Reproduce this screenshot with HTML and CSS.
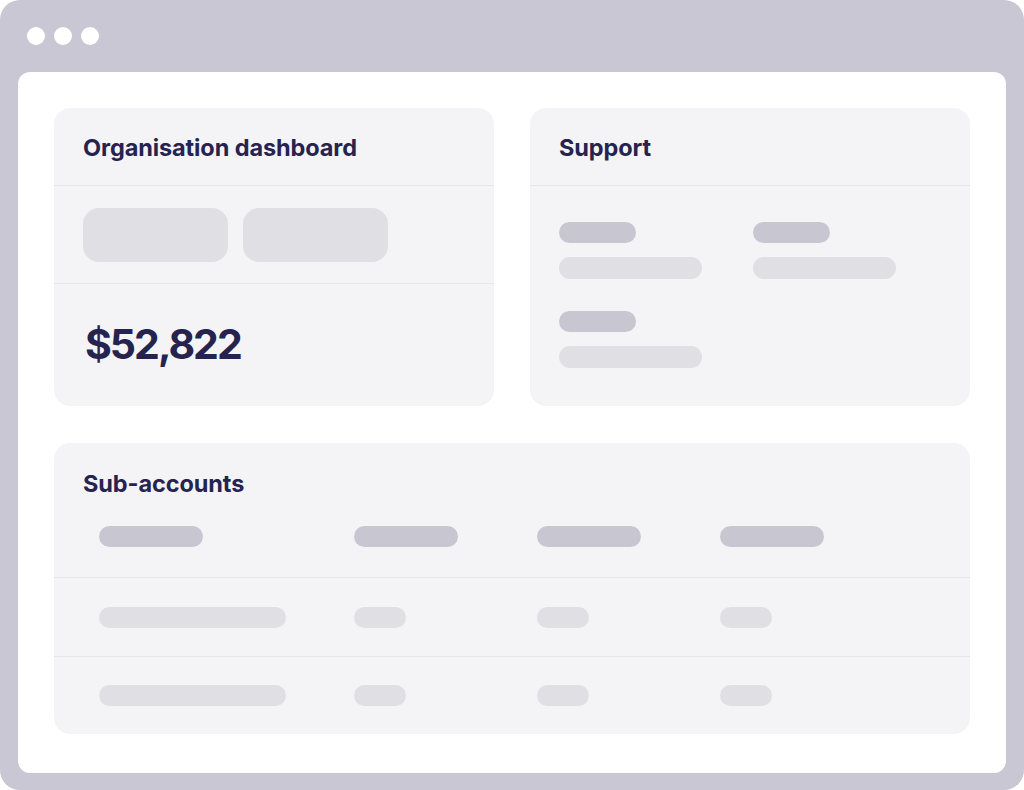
FILE: index.html
```html
<!DOCTYPE html>
<html lang="en">
<head>
    <meta charset="UTF-8">
    <meta name="viewport" content="width=device-width, initial-scale=1.0">
    <title>Organisation dashboard</title>
    <link rel="stylesheet" href="styles.css">
</head>
<body>
    <div class="browser">
        <div class="browser-bar">
            <span class="dot"></span>
            <span class="dot"></span>
            <span class="dot"></span>
        </div>

        <div class="viewport">
            <div class="card">
                <div class="card-header">
                    <h2>Organisation dashboard</h2>
                </div>
                <div class="card-tabs">
                    <div class="tab-block"></div>
                    <div class="tab-block"></div>
                </div>
                <div class="card-amount">$52,822</div>
            </div>

            <div class="card">
                <div class="card-header">
                    <h2>Support</h2>
                </div>
                <div class="support-grid">
                    <div class="support-item">
                        <div class="bar bar-dark bar-short"></div>
                        <div class="bar bar-light bar-long"></div>
                    </div>
                    <div class="support-item">
                        <div class="bar bar-dark bar-short"></div>
                        <div class="bar bar-light bar-long"></div>
                    </div>
                    <div class="support-item">
                        <div class="bar bar-dark bar-short"></div>
                        <div class="bar bar-light bar-long"></div>
                    </div>
                </div>
            </div>

            <div class="card card-wide">
                <h2 class="table-title">Sub-accounts</h2>
                <div class="table-row table-head">
                    <div class="bar bar-dark bar-col"></div>
                    <div class="bar bar-dark bar-col"></div>
                    <div class="bar bar-dark bar-col"></div>
                    <div class="bar bar-dark bar-col"></div>
                </div>
                <div class="table-row">
                    <div class="bar bar-light bar-name"></div>
                    <div class="bar bar-light bar-cell"></div>
                    <div class="bar bar-light bar-cell"></div>
                    <div class="bar bar-light bar-cell"></div>
                </div>
                <div class="table-row">
                    <div class="bar bar-light bar-name"></div>
                    <div class="bar bar-light bar-cell"></div>
                    <div class="bar bar-light bar-cell"></div>
                    <div class="bar bar-light bar-cell"></div>
                </div>
            </div>
        </div>
    </div>
</body>
</html>
```

FILE: styles.css
```css
body {
    margin: 0;
    padding: 0;
    background: white;
    font-family: 'Inter', 'Liberation Sans', sans-serif;
    color: #27234f;
}

.browser {
    height: 790px;
    box-sizing: border-box;
    background: #c9c7d4;
    border-radius: 20px;
    padding: 0 18px 18px;
    display: flex;
    flex-direction: column;
}

.browser-bar {
    height: 72px;
    flex-shrink: 0;
    display: flex;
    align-items: center;
    gap: 9px;
    padding-left: 9px;
}

.dot {
    width: 18px;
    height: 18px;
    border-radius: 50%;
    background: white;
}

.viewport {
    flex: 1;
    background: white;
    border-radius: 12px;
    padding: 36px 36px 39px;
    display: grid;
    grid-template-columns: 1fr 1fr;
    grid-template-rows: 298px 1fr;
    column-gap: 36px;
    row-gap: 37px;
}

.card {
    background: #f4f4f7;
    border-radius: 16px;
    display: flex;
    flex-direction: column;
    overflow: hidden;
}

.card-wide {
    grid-column: 1 / 3;
}

.card h2 {
    margin: 0;
    font-size: 23.5px;
    font-weight: 700;
    line-height: 24px;
    letter-spacing: -0.1px;
}

.card-header {
    height: 78px;
    display: flex;
    align-items: center;
    padding: 2px 0 0 29px;
    box-sizing: border-box;
    border-bottom: 1px solid #e5e5ea;
}

.card-tabs {
    display: flex;
    gap: 15px;
    padding: 22px 29px 21px;
    border-bottom: 1px solid #e5e5ea;
}

.tab-block {
    width: 145px;
    height: 54px;
    border-radius: 16px;
    background: #dfdfe4;
}

.card-amount {
    flex: 1;
    display: flex;
    align-items: center;
    padding: 0 0 2px 31px;
    font-size: 41px;
    font-weight: 700;
    letter-spacing: -2px;
}

.bar {
    height: 21px;
    border-radius: 11px;
}

.bar-dark {
    background: #c8c7d1;
}

.bar-light {
    background: #dfdfe4;
}

.support-grid {
    display: grid;
    grid-template-columns: 194px 194px;
    row-gap: 32px;
    padding: 36px 29px 0;
}

.support-item {
    display: flex;
    flex-direction: column;
    gap: 14px;
}

.bar-short {
    width: 77px;
}

.bar-long {
    width: 143px;
    height: 22px;
}

.table-title {
    padding: 29px 29px 0;
}

.table-row {
    display: grid;
    grid-template-columns: 255px 183px 183px 1fr;
    align-items: center;
    padding-left: 45px;
    height: 78px;
    border-top: 1px solid #e5e5ea;
}

.table-row:last-child {
    height: 77px;
}

.table-head {
    height: auto;
    border-top: none;
    padding-top: 30px;
    padding-bottom: 30px;
}

.bar-col {
    width: 104px;
}

.bar-name {
    width: 187px;
}

.bar-cell {
    width: 52px;
}
```
